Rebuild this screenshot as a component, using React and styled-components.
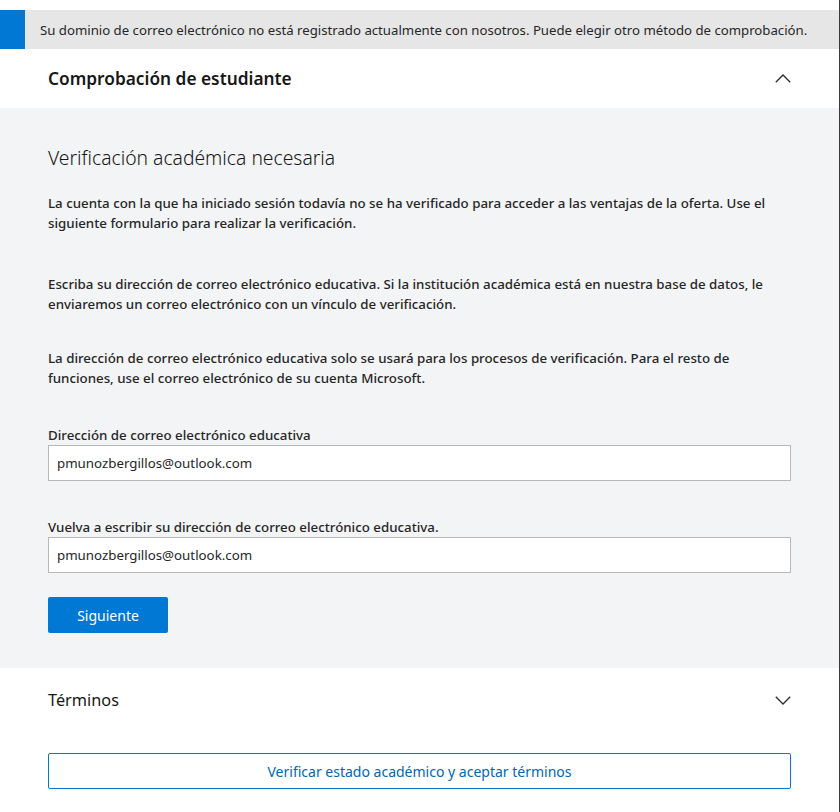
import React from "react";
import styled, { createGlobalStyle } from "styled-components";

const GlobalStyle = createGlobalStyle`
  html, body { margin: 0; padding: 0; background: #ffffff; }
  body {
    font-family: "Noto Sans", "Open Sans", sans-serif;
    color: #262626;
    -webkit-font-smoothing: antialiased;
  }
  * { box-sizing: border-box; }
`;

const Page = styled.div`
  width: 840px;
  min-height: 812px;
  border-right: 1px solid #3a3a3a;
  padding-top: 10px;
  background: #ffffff;
`;

const Banner = styled.div`
  display: flex;
  align-items: center;
  height: 39px;
  background: #e6e6e6;
  width: 839px;
`;

const BannerStrip = styled.div`
  width: 25px;
  align-self: stretch;
  background: #0078d4;
`;

const BannerText = styled.span`
  padding-left: 15px;
  font-size: 13.2px;
  color: #262626;
  white-space: nowrap;
`;

const SectionHeader = styled.div`
  display: flex;
  align-items: center;
  justify-content: space-between;
  height: ${(p) => p.$height}px;
  padding: 0 48px 0 48px;
`;

const SectionTitle = styled.h3`
  margin: 0;
  font-size: ${(p) => p.$size}px;
  font-weight: ${(p) => p.$weight};
  color: #171717;
  line-height: 24px;
`;

const Panel = styled.div`
  background: #f3f4f6;
  padding: 36px 47px 35px 48px;
  display: flex;
  flex-direction: column;
`;

const Heading = styled.h2`
  margin: 0;
  font-size: 19.3px;
  font-weight: 300;
  line-height: 28px;
  color: #171717;
`;

const Paragraph = styled.p`
  margin: ${(p) => p.$top}px 0 0 0;
  font-size: 13.3px;
  font-weight: 500;
  line-height: 20px;
  color: #262626;
`;

const Label = styled.label`
  display: block;
  margin-top: ${(p) => p.$top}px;
  font-size: 13.3px;
  font-weight: 500;
  line-height: 20px;
  color: #262626;
`;

const TextInput = styled.input`
  display: block;
  width: 743px;
  height: 36px;
  border: 1px solid #b8b8b8;
  background: #ffffff;
  padding: 0 8px;
  font-family: inherit;
  font-size: 13.3px;
  color: #262626;
  outline: none;
`;

const PrimaryButton = styled.button`
  margin-top: 24px;
  width: 120px;
  height: 36px;
  border: none;
  border-radius: 2px;
  background: #0078d4;
  color: #ffffff;
  font-family: inherit;
  font-size: 14px;
  font-weight: 400;
  cursor: pointer;
`;

const OutlineButton = styled.button`
  display: block;
  margin: 21px 0 0 48px;
  width: 743px;
  height: 36px;
  border: 1px solid #0078d4;
  border-radius: 2px;
  background: #ffffff;
  color: #0067b8;
  font-family: inherit;
  font-size: 14px;
  font-weight: 400;
  cursor: pointer;
`;

const Chevron = ({ up }) => (
  <svg width="16" height="9" viewBox="0 0 16 9" aria-hidden="true">
    <polyline
      points={up ? "0.8,8.2 8,1 15.2,8.2" : "0.8,0.8 8,8 15.2,0.8"}
      fill="none"
      stroke="#2b2b2b"
      strokeWidth="1.3"
    />
  </svg>
);

export default function App() {
  return (
    <>
      <GlobalStyle />
      <Page>
        <Banner>
          <BannerStrip />
          <BannerText>
            Su dominio de correo electrónico no está registrado actualmente con nosotros. Puede elegir otro método de comprobación.
          </BannerText>
        </Banner>
        <SectionHeader $height={59}>
          <SectionTitle $size={17.3} $weight={600}>Comprobación de estudiante</SectionTitle>
          <Chevron up />
        </SectionHeader>
        <Panel>
          <Heading>Verificación académica necesaria</Heading>
          <Paragraph $top={21}>
            La cuenta con la que ha iniciado sesión todavía no se ha verificado para acceder a las ventajas de la oferta. Use el siguiente formulario para realizar la verificación.
          </Paragraph>
          <Paragraph $top={41}>
            Escriba su dirección de correo electrónico educativa. Si la institución académica está en nuestra base de datos, le enviaremos un correo electrónico con un vínculo de verificación.
          </Paragraph>
          <Paragraph $top={34}>
            La dirección de correo electrónico educativa solo se usará para los procesos de verificación. Para el resto de funciones, use el correo electrónico de su cuenta Microsoft.
          </Paragraph>
          <Label $top={37} htmlFor="email1">Dirección de correo electrónico educativa</Label>
          <TextInput id="email1" type="text" defaultValue="pmunozbergillos@outlook.com" />
          <Label $top={36} htmlFor="email2">Vuelva a escribir su dirección de correo electrónico educativa.</Label>
          <TextInput id="email2" type="text" defaultValue="pmunozbergillos@outlook.com" />
          <div>
            <PrimaryButton type="button">Siguiente</PrimaryButton>
          </div>
        </Panel>
        <SectionHeader $height={64}>
          <SectionTitle $size={16.3} $weight={400}>Términos</SectionTitle>
          <Chevron />
        </SectionHeader>
        <OutlineButton type="button">Verificar estado académico y aceptar términos</OutlineButton>
      </Page>
    </>
  );
}
